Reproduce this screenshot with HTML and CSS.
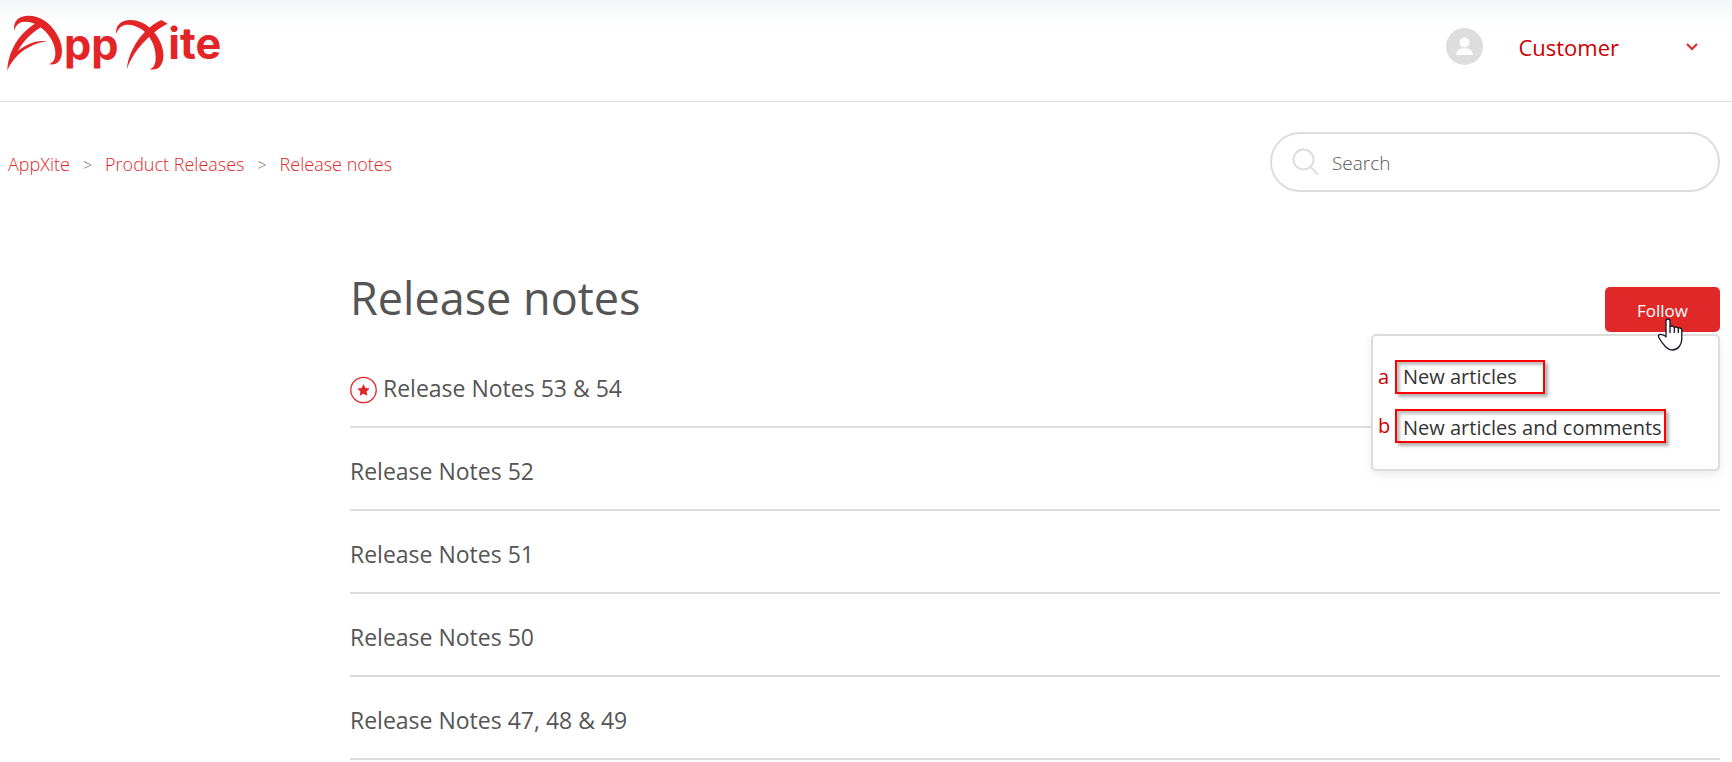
FILE: index.html
```html
<!DOCTYPE html>
<html lang="en">
<head>
<meta charset="utf-8">
<title>Release notes – AppXite</title>
<link rel="stylesheet" href="styles.css">
</head>
<body>
<header class="header">
  <a class="logo" href="#" aria-label="AppXite">
    <svg class="logo-art" viewBox="0 0 720 240" aria-hidden="true">
      <path d="M43 92C38 62 58 47 85 47C120 47 150 68 168 98C190 132 190 165 178 182C170 194 155 195 145 192C160 190 167 175 166 155C163 125 145 98 120 80C100 66 75 62 60 68C50 73 46 80 43 92Z"/>
      <path d="M110 68L134 76C100 92 68 125 54 153C76 134 110 118 141 124C105 128 65 150 45 175C33 190 26 200 22 213C22 170 45 120 80 90C92 79 102 72 110 68Z"/>
      <path d="M348 102C346 75 365 60 390 60C425 60 455 80 475 115C495 150 495 185 478 202C470 209 460 210 449 207C462 204 468 190 467 170C466 135 450 108 425 88C405 74 380 70 367 78C357 84 352 92 348 102Z"/>
      <path d="M484 60L503 71C465 90 405 140 381 206C384 160 420 90 484 60Z"/>
      <text x="192" y="180">pp</text>
      <text x="505" y="178">ite</text>
    </svg>
  </a>
  <button class="account" type="button">
    <svg class="avatar" viewBox="0 0 37 37" aria-hidden="true"><circle cx="18.500" cy="18.500" r="18.500" fill="#ddd"/><circle cx="18.500" cy="14.500" r="5" fill="#fff"/><path d="M10 27q1-7 8.500-7t8.500 7z" fill="#fff"/></svg>
    <span class="account-name">Customer</span>
    <svg class="chevron" viewBox="0 0 12 8" aria-hidden="true"><path d="M1 1l5 5 5-5" fill="none" stroke="#e02828" stroke-width="2"/></svg>
  </button>
</header>
<main class="page">
  <div class="subnav">
    <nav aria-label="Breadcrumb">
      <ol class="crumbs">
        <li><a href="#">AppXite</a></li>
        <li><a href="#">Product Releases</a></li>
        <li><a href="#">Release notes</a></li>
      </ol>
    </nav>
    <form class="search" role="search">
      <svg class="search-icon" viewBox="0 0 28 28" aria-hidden="true"><circle cx="11.500" cy="11.500" r="10"/><path d="M18 18.500l8 8"/></svg>
      <input type="search" placeholder="Search" aria-label="Search">
    </form>
  </div>
  <section class="content">
    <div class="title-row">
      <h1>Release notes</h1>
      <div class="follow">
        <button class="follow-btn" type="button" aria-expanded="true">Follow</button>
        <ul class="menu">
          <li><span class="mark">a</span><button class="option option-a" type="button">New articles</button></li>
          <li><span class="mark">b</span><button class="option option-b" type="button">New articles and comments</button></li>
        </ul>
        <svg class="cursor" viewBox="0 0 26 33" aria-hidden="true"><path d="M9 19V3Q9 1 11 1t2 2V9.500q0-1.500 2-1.500t2.300 2v.5q0-1.500 2-1.300t2 1.800q0-1.300 1.700-1t1.800 2V21q0 4-2.500 7.500-3 3.500-6.500 3.500-4 0-7-3-4-4-7-9.500-1-2.500 1-3t6.200 2zM13 9v6M17.300 10v5M21.300 11v4" fill="#fff" stroke="#151525" stroke-width="1.300" stroke-linejoin="round"/></svg>
      </div>
    </div>
    <ul class="articles">
      <li><svg class="star" viewBox="0 0 28 28" aria-hidden="true"><circle cx="13.500" cy="14" r="12.700" fill="none" stroke="#e02828" stroke-width="1.300"/><path d="M13.500 8l1.900 3.900 4.300.6-3.100 3 .7 4.300-3.800-2-3.800 2 .7-4.300-3.100-3 4.300-.6z" fill="#e02828"/></svg><a href="#">Release Notes 53 &amp; 54</a></li>
      <li><a href="#">Release Notes 52</a></li>
      <li><a href="#">Release Notes 51</a></li>
      <li><a href="#">Release Notes 50</a></li>
      <li><a href="#">Release Notes 47, 48 &amp; 49</a></li>
    </ul>
  </section>
</main>
</body>
</html>
```
FILE: styles.css
```css
* { box-sizing: border-box; }
body {
  margin: 0;
  background: #fff;
  color: #555;
  font-family: "Open Sans", "Noto Sans", sans-serif;
}
button { border: 0; background: none; font: inherit; cursor: pointer; }
a { color: inherit; text-decoration: none; }
ul, ol { margin: 0; padding: 0; list-style: none; }
svg { display: block; }

.header {
  display: flex;
  justify-content: space-between;
  align-items: flex-start;
  height: 102px;
  border-bottom: 1px solid #ddd;
  background: linear-gradient(#f4f7f7, #fff 28px);
}
.logo-art { width: 240px; height: 80px; fill: #e42528; }
.logo-art text { font: 700 130px Inter, sans-serif; }
.account {
  display: flex;
  align-items: center;
  padding: 28px 34px 0 0;
  color: #c00;
}
.avatar { width: 37px; height: 37px; }
.account-name { margin: 0 67px 0 35px; font-size: 22px; line-height: 32px; }
.chevron { width: 12px; height: 8px; }

.page { padding: 30px 12px 0 8px; }
.subnav { display: flex; justify-content: space-between; align-items: center; }
.crumbs { display: flex; padding-top: 4px; font-size: 18px; font-weight: 300; color: #e02828; }
.crumbs li + li::before {
  content: ">";
  margin: 0 13px;
  color: #777;
  font-size: 16px;
}
.search {
  display: flex;
  align-items: center;
  width: 450px;
  height: 60px;
  padding: 0 20px;
  border: 2px solid #ddd;
  border-radius: 30px;
}
.search-icon { width: 28px; height: 28px; fill: none; stroke: #ddd; stroke-width: 2; }
.search input {
  flex: 1;
  min-width: 0;
  padding: 2px 0 0 12px;
  border: 0;
  outline: 0;
  background: none;
  font: 300 19px "Open Sans", sans-serif;
}
.search input::placeholder { color: #555; opacity: 1; }

.content { margin-left: 342px; padding-top: 72px; }
.title-row { display: flex; justify-content: space-between; align-items: flex-start; height: 81px; }
h1 { margin: 0; font-size: 45px; font-weight: 400; line-height: 68px; }
.follow { position: relative; padding-top: 23px; }
.follow-btn {
  width: 115px;
  height: 45px;
  padding-top: 3px;
  border-radius: 5px;
  background: #e02828;
  color: #fff;
  font-size: 17px;
}
.menu {
  position: absolute;
  top: 70px;
  right: 0;
  width: 349px;
  padding: 24px 5px 26px;
  border: 2px solid #ddd;
  border-radius: 5px;
  background: #fff;
  box-shadow: 0 4px 10px rgba(0, 0, 0, .08);
  z-index: 1;
}
.menu li { display: flex; align-items: center; }
.menu li + li { margin-top: 15px; }
.mark { width: 17px; color: #c00; font-size: 20px; line-height: 28px; }
.option {
  height: 34px;
  padding: 0 6px;
  border: 2px solid #f00;
  box-shadow: 3px 3px 3px rgba(0, 0, 0, .3), inset 3px 3px 3px rgba(0, 0, 0, .25);
  color: #333;
  font-size: 20px;
  line-height: 28px;
  text-align: left;
  white-space: nowrap;
}
.option-a { width: 150px; }
.option-b { width: 271px; padding-top: 2px; line-height: 30px; }
.cursor { position: absolute; top: 54px; right: 37px; width: 26px; height: 33px; z-index: 2; }

.articles li {
  display: flex;
  align-items: center;
  height: 83px;
  padding-top: 4px;
  border-bottom: 2px solid #ddd;
  font-size: 23px;
}
.star { width: 28px; height: 28px; margin: 4px 5px 0 0; }
```
